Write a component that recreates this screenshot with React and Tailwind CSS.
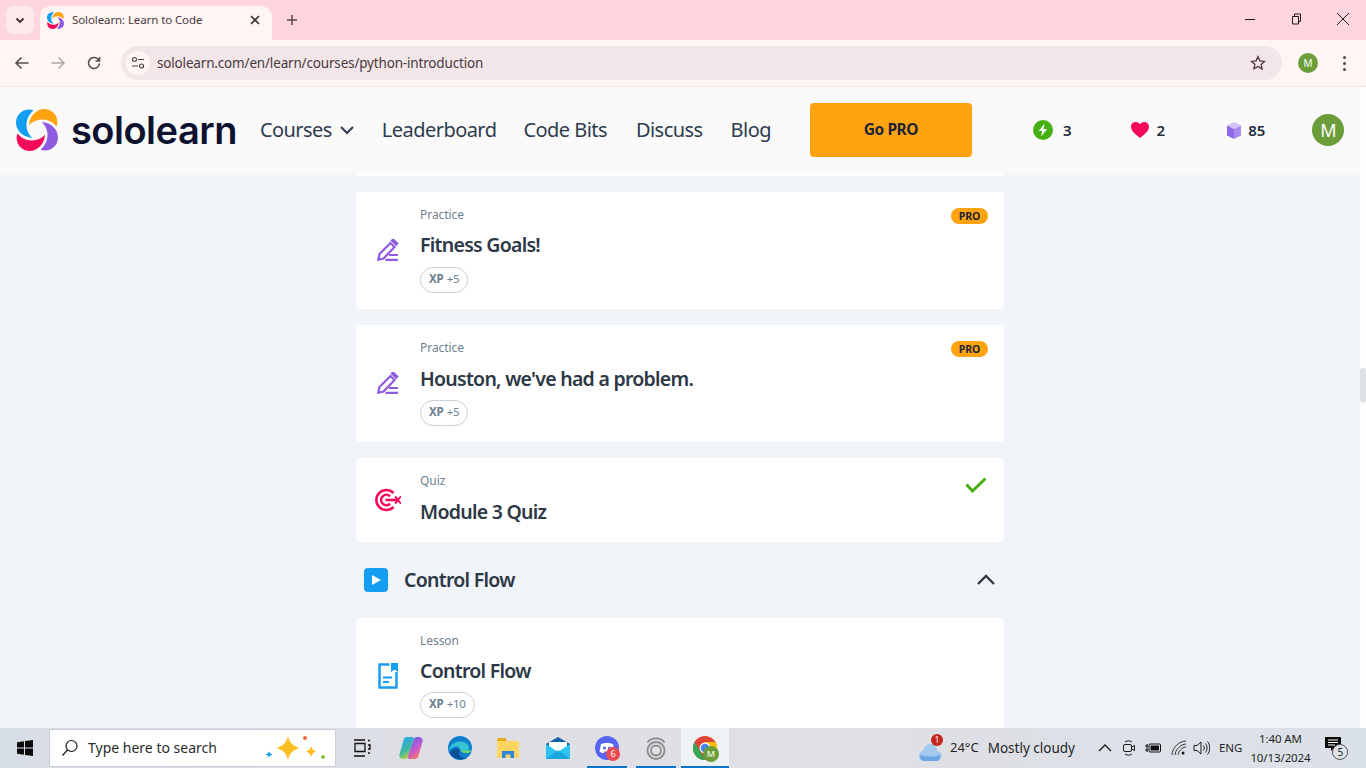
import React from "react";

const SANS = "font-['Noto_Sans','Open_Sans',sans-serif]";
const BLADE = "M13 .6C5.5.8 0 6.500 0 13.600 0 21.800 7 28.300 16.200 29 12.500 25.500 10.300 20.500 10.500 15.500 10.700 9.500 13.500 4.800 17.500 1.500 16.300 .9 14.800 .6 13 .6Z";

function LogoMark({ size }) {
  return (
    <svg width={size} height={size} viewBox="0 0 42 42" className="shrink-0">
      <path d={BLADE} fill="#149ef2" />
      <path d={BLADE} fill="#ffa310" transform="rotate(90 21 21)" />
      <path d={BLADE} fill="#8e5ae0" transform="rotate(180 21 21)" />
      <path d={BLADE} fill="#f50a5a" transform="rotate(270 21 21)" />
    </svg>
  );
}

function TabStrip() {
  return (
    <div className={`flex h-10 items-end bg-[#ffd6de] pl-[6px] ${SANS}`}>
      <div className="mb-[6px] flex h-[28px] w-[28px] items-center justify-center rounded-lg bg-[#ffe8ec]">
        <svg width="12" height="12" viewBox="0 0 12 12" fill="none" stroke="#3d2b30" strokeWidth="1.800"><path d="M2.500 4.500 6 8l3.500-3.500" /></svg>
      </div>
      <div className="ml-[6px] flex h-[34px] w-[232px] items-center rounded-t-[10px] bg-[#fff5f5] pb-[6px] pl-[7px] pr-[11px]">
        <LogoMark size={17} />
        <span className="ml-2 flex-1 text-[11.5px] tracking-[-0.1px] text-[#4a3a3e]">Sololearn: Learn to Code</span>
        <svg width="12" height="12" viewBox="0 0 12 12" fill="none" stroke="#3d2b30" strokeWidth="1.600"><path d="M2 2l8 8M10 2l-8 8" /></svg>
      </div>
      <div className="mb-[14px] ml-[14px] flex h-3 w-3 items-center justify-center">
        <svg width="12" height="12" viewBox="0 0 12 12" fill="none" stroke="#5a4348" strokeWidth="1.500"><path d="M6 1v10M1 6h10" /></svg>
      </div>
      <div className="mb-[14px] ml-auto flex items-center">
        <svg width="12" height="12" viewBox="0 0 12 12" stroke="#1a1a1a" fill="none" className="mr-[34px]"><path d="M1 6.500h10" /></svg>
        <svg width="12" height="12" viewBox="0 0 12 12" stroke="#1a1a1a" fill="none" className="mr-[34px]"><path d="M2.500 3.500h6v7.500h-6zM4.500 3.500V1h6v7.500h-2" /></svg>
        <svg width="14" height="14" viewBox="0 0 14 14" stroke="#1a1a1a" fill="none" className="mr-4"><path d="M1 1l12 12M13 1 1 13" /></svg>
      </div>
    </div>
  );
}

function Toolbar() {
  return (
    <div className={`flex h-[47px] items-center border-b border-[#f5dfe3] bg-[#fff5f5] pl-[14px] ${SANS}`}>
      <svg width="16" height="16" viewBox="0 0 16 16" fill="none" stroke="#5a4a4e" strokeWidth="1.600"><path d="M14.500 8H2M7.500 2.500 2 8l5.500 5.500" /></svg>
      <svg width="16" height="16" viewBox="0 0 16 16" fill="none" stroke="#b4a6a9" strokeWidth="1.600" className="ml-5"><path d="M1.500 8H14M8.500 2.500 14 8l-5.500 5.500" /></svg>
      <svg width="16" height="16" viewBox="0 0 16 16" fill="none" stroke="#5a4a4e" strokeWidth="1.600" className="ml-[20px]"><path d="M13.500 8.500A5.500 5.500 0 1 1 12 4.200L13.500 6M13.500 2v4h-4" /></svg>
      <div className="ml-[19px] flex h-[34px] flex-1 items-center rounded-full bg-[#f2e6e9] pl-[5px] pr-[16px]">
        <div className="flex h-6 w-6 items-center justify-center rounded-full bg-[#fff5f5]">
          <svg width="14" height="14" viewBox="0 0 14 14" fill="none" stroke="#4a3a3e" strokeWidth="1.200"><circle cx="3.500" cy="3.500" r="2" /><path d="M7 3.500h6M1 10h6" /><circle cx="10.500" cy="10" r="2" /></svg>
        </div>
        <span className="ml-[7px] flex-1 text-[13.5px] tracking-[-0.17px] text-[#4a3a3e]">sololearn.com/en/learn/courses/python-introduction</span>
        <svg width="16" height="16" viewBox="0 0 24 24" fill="none" stroke="#4a3a3e" strokeWidth="2"><path d="M12 2.500l2.900 6.300 6.900.8-5.100 4.700 1.400 6.800L12 17.200 5.900 20.600l1.400-6.800L2.200 9.600l6.900-.8z" /></svg>
      </div>
      <div className="ml-[16px] flex h-5 w-5 items-center justify-center rounded-full bg-[#6b9d3a] text-[10px] text-white">M</div>
      <div className="ml-[25px] mr-[20px] flex w-[3px] flex-col gap-[3px]">
        <span className="h-[3px] w-[3px] rounded-full bg-[#5a4348]" />
        <span className="h-[3px] w-[3px] rounded-full bg-[#5a4348]" />
        <span className="h-[3px] w-[3px] rounded-full bg-[#5a4348]" />
      </div>
    </div>
  );
}

function NavLink({ children, className = "" }) {
  return <span className={`text-[20px] tracking-[-0.55px] text-[#2d3b4e] ${className}`}>{children}</span>;
}

function SiteHeader() {
  return (
    <header className={`flex h-[86px] shrink-0 items-center bg-[#fafafa] pl-4 ${SANS}`}>
      <LogoMark size={42} />
      <span className="ml-[13px] font-['Inter',sans-serif] text-[38px] font-semibold leading-none tracking-[-0.5px] text-[#0c1230]">sololearn</span>
      <NavLink className="ml-[23px]">Courses</NavLink>
      <svg width="16" height="16" viewBox="0 0 16 16" fill="none" stroke="#2d3b4e" strokeWidth="2" className="ml-[7px]"><path d="M2 5l6 6 6-6" /></svg>
      <NavLink className="ml-[27px]">Leaderboard</NavLink>
      <NavLink className="ml-[27px]">Code Bits</NavLink>
      <NavLink className="ml-[29px]">Discuss</NavLink>
      <NavLink className="ml-[28px]">Blog</NavLink>
      <div className="ml-[39px] flex h-[54px] w-[162px] items-center justify-center rounded bg-[#ffa310] text-[15.5px] font-bold tracking-[-0.4px] text-[#1d2433]">Go PRO</div>
      <svg width="20" height="20" viewBox="0 0 20 20" className="ml-[61px]">
        <circle cx="10" cy="10" r="10" fill="#46b012" />
        <path d="M11.500 3.500 5.800 11h3.400l-1 5.500L14.200 9h-3.600z" fill="#fff" />
      </svg>
      <span className="ml-[10px] text-[15px] font-semibold text-[#222c3a]">3</span>
      <svg width="18" height="16" viewBox="0 0 18 16" className="ml-[59px]">
        <path d="M9 16C6 13.500 0 9.500 0 4.800 0 2 2.200 0 4.800 0 6.500 0 8 .9 9 2.300 10 .9 11.500 0 13.200 0 15.800 0 18 2 18 4.800 18 9.500 12 13.500 9 16Z" fill="#f50a5a" />
      </svg>
      <span className="ml-[8px] text-[15px] font-semibold text-[#222c3a]">2</span>
      <svg width="14" height="17" viewBox="0 0 14 17" className="ml-[62px]">
        <path d="M7 0l7 3.500L7 7 0 3.500z" fill="#d3c3f5" />
        <path d="M0 3.500 7 7v10l-7-3.500z" fill="#8e6ae8" />
        <path d="M14 3.500 7 7v10l7-3.500z" fill="#a98af0" />
      </svg>
      <span className="ml-[7px] text-[15px] font-semibold text-[#222c3a]">85</span>
      <div className="ml-[47px] flex h-8 w-8 items-center justify-center rounded-full bg-[#6b9d3a] text-lg text-white">M</div>
    </header>
  );
}

function PencilIcon() {
  return (
    <svg width="22" height="22" viewBox="0 0 22 22" fill="none" stroke="#8e5ae0" strokeWidth="2.200">
      <path d="M1.300 20.700 2.500 15 13.500 4l4 4L6.500 19.500z" />
      <path d="M15 1.500l1.200-1 4 4-1 1.200z" fill="#8e5ae0" />
      <path d="M12 16h9M8.500 20.800H21" />
    </svg>
  );
}

function TargetIcon() {
  return (
    <svg width="26" height="24" viewBox="0 0 26 24" fill="none" stroke="#f50a5a" strokeWidth="2.600">
      <path d="M18.500 5A10 10 0 1 0 18.500 19" />
      <path d="M15 8.300A5.200 5.200 0 1 0 15 15.700" />
      <path d="M10.500 12H24" />
      <path d="M20 8.500l3.500 3.500-3.500 3.500M26 8.500 22.500 12l3.500 3.500" strokeWidth="1.800" />
    </svg>
  );
}

function DocIcon() {
  return (
    <svg width="20" height="26" viewBox="0 0 20 26" fill="none">
      <path d="M11.500 1.500H1.500v23h17V9" stroke="#149ef2" strokeWidth="2.500" />
      <path d="M13 0h7v9l-3.500-2.500L13 9z" fill="#149ef2" />
      <path d="M5 14.500h9M5 19h6" stroke="#149ef2" strokeWidth="2" />
    </svg>
  );
}

function XpPill({ value, className = "" }) {
  return (
    <div className={`flex h-[26px] w-fit items-center gap-[3.5px] rounded-full border border-[#c8d2dc] px-2 pb-[2px] text-[11.5px] leading-none tracking-[-0.3px] text-[#6e7f92] ${className}`}>
      <span className="font-bold">XP</span>
      <span>{value}</span>
    </div>
  );
}

function Card({ label, title, icon, xp, pro, check, cardClass = "pb-4 pt-[15px]", titleClass = "mt-[9px]", pillClass = "mt-[9px]", iconClass = "items-center" }) {
  return (
    <div className={`relative flex w-[648px] shrink-0 rounded bg-white ${cardClass}`}>
      <div className={`flex w-[64px] shrink-0 justify-center ${iconClass}`}>{icon}</div>
      <div className="flex flex-col">
        <span className="h-4 text-xs leading-4 tracking-[-0.05px] text-[#6e7f92]">{label}</span>
        <span className={`h-[26px] text-[19.5px] font-semibold leading-[26px] tracking-[-0.73px] text-[#2d3846] ${titleClass}`}>{title}</span>
        {xp && <XpPill value={xp} className={pillClass} />}
      </div>
      {pro && (
        <span className="absolute right-4 top-4 flex h-4 w-[37px] items-center justify-center rounded-full bg-[#ffa310] text-[10.5px] font-bold leading-none text-[#1d2433]">PRO</span>
      )}
      {check && (
        <svg width="22" height="16" viewBox="0 0 22 16" fill="none" stroke="#46b012" strokeWidth="3" className="absolute right-[17px] top-[19px]">
          <path d="M1.500 7.500 7.500 14 20.500 1.500" />
        </svg>
      )}
    </div>
  );
}

function SectionHeader() {
  return (
    <div className="flex h-[76px] w-[648px] shrink-0 items-center px-2">
      <div className="flex h-6 w-6 items-center justify-center rounded bg-[#149ef2]">
        <svg width="10" height="10" viewBox="0 0 10 10"><path d="M1 0l9 5-9 5z" fill="#fff" /></svg>
      </div>
      <span className="ml-4 flex-1 text-[19.5px] font-semibold tracking-[-0.73px] text-[#2d3846]">Control Flow</span>
      <svg width="20" height="20" viewBox="0 0 20 20" fill="none" stroke="#2d3846" strokeWidth="2.300"><path d="M2 14l8-8 8 8" /></svg>
    </div>
  );
}

function Content() {
  return (
    <main className={`min-h-0 flex-1 overflow-hidden bg-[#f1f4f8] ${SANS}`}>
      <div className="flex flex-col items-center">
        <div className="h-[3px] w-[648px] shrink-0 rounded-b bg-white" />
        <div className="mt-4 flex flex-col gap-4">
          <Card label="Practice" title="Fitness Goals!" xp="+5" pro icon={<PencilIcon />} />
          <Card label="Practice" title="Houston, we've had a problem." xp="+5" pro icon={<PencilIcon />} titleClass="mt-[10px]" pillClass="mt-[8px]" />
          <Card label="Quiz" title="Module 3 Quiz" check icon={<TargetIcon />} cardClass="pb-[17px] pt-[15px]" titleClass="mt-[10px]" iconClass="items-start pt-[15px]" />
        </div>
        <SectionHeader />
        <Card label="Lesson" title="Control Flow" xp="+10" icon={<DocIcon />} pillClass="mt-[8px]" />
      </div>
    </main>
  );
}

function Windows() {
  return (
    <svg width="16" height="16" viewBox="0 0 16 16" fill="#0a0a0a">
      <path d="M0 2.200 7 1.200V7.500H0zM8 1 16 0V7.500H8zM0 8.500h7v6.300L0 13.800zM8 8.500h8V16l-8-1z" />
    </svg>
  );
}

function Sparkles() {
  return (
    <svg width="62" height="30" viewBox="0 0 62 30" className="ml-auto mr-[9px]">
      <path d="M24 3c1.800 6.500 4 9.500 11.500 12C28 17.500 25.800 20.500 24 27c-1.800-6.500-4-9.500-11.500-12C20 12.500 22.200 9.500 24 3Z" fill="#fbbf24" />
      <path d="M47 13c.7 2.800 1.800 4.200 5 5.500-3.200 1.300-4.300 2.700-5 5.500-.7-2.800-1.800-4.200-5-5.500 3.200-1.300 4.300-2.700 5-5.500Z" fill="#fbbf24" />
      <path d="M5 18c.4 1.800 1.200 2.700 3.500 3.500-2.300.8-3.100 1.700-3.500 3.500-.4-1.800-1.200-2.700-3.500-3.500 2.300-.8 3.100-1.700 3.500-3.500Z" fill="#1aa0ea" />
      <circle cx="41" cy="5" r="2" fill="#ef6a3a" />
      <circle cx="59" cy="24" r="2" fill="#8ac63c" />
    </svg>
  );
}

function AppSlot({ children, active, open, className = "w-[48px]" }) {
  return (
    <div className={`relative flex h-10 shrink-0 items-center justify-center ${active ? "bg-[#eef2f6]" : ""} ${className}`}>
      {children}
      {open && <span className="absolute inset-x-0 bottom-0 h-[2px] bg-[#0a74c9]" />}
    </div>
  );
}

function Taskbar() {
  return (
    <footer className={`flex h-10 shrink-0 items-center bg-gradient-to-r from-[#d7dde6] via-[#e1dfe4] to-[#dbe1e9] ${SANS}`}>
      <div className="flex w-[49px] justify-center"><Windows /></div>
      <div className="flex h-[38px] w-[287px] items-center border border-[#c9ced6] bg-white pl-[11px]">
        <svg width="18" height="18" viewBox="0 0 18 18" fill="none" stroke="#1a1a1a" strokeWidth="1.200"><circle cx="10.500" cy="7" r="5.500" /><path d="M6.500 11 1.500 16.500" /></svg>
        <span className="ml-[9px] text-sm text-[#2b2b2b]">Type here to search</span>
        <Sparkles />
      </div>
      <AppSlot className="ml-[1px] w-[49px]">
        <svg width="18" height="18" viewBox="0 0 18 18" fill="none" stroke="#111" strokeWidth="1.300">
          <path d="M1 1h11M1 17h11M2 4.500h10v8H2z" />
          <path d="M15 1.500h2M15 6h2v4h-2M15 14h2" />
        </svg>
      </AppSlot>
      <AppSlot className="w-[50px]">
        <svg width="24" height="24" viewBox="0 0 24 24">
          <defs>
            <linearGradient id="cp1" x1="0.200" y1="0" x2="0.600" y2="1"><stop offset="0" stopColor="#2aa8f2" /><stop offset="0.600" stopColor="#3fb8a0" /><stop offset="1" stopColor="#c8d63a" /></linearGradient>
            <linearGradient id="cp2" x1="0.300" y1="0" x2="0.800" y2="1"><stop offset="0" stopColor="#6a5cf0" /><stop offset="0.600" stopColor="#d35bc0" /><stop offset="1" stopColor="#f5894a" /></linearGradient>
          </defs>
          <path d="M8 1h5c1.500 0 2 1 1.500 2.500L9.500 20c-.5 1.700-1.500 3-3.500 3H4c-2.500 0-4.200-2-3.500-4.500L4.500 4C5 2 6 1 8 1Z" fill="url(#cp1)" />
          <path d="M15.500 23h-5c-1.500 0-2-1-1.500-2.500L14.500 4c.5-1.700 1.500-3 3.500-3h2c2.500 0 4.200 2 3.500 4.500L19.500 20c-.5 2-1.500 3-4 3Z" fill="url(#cp2)" />
        </svg>
      </AppSlot>
      <AppSlot>
        <svg width="26" height="26" viewBox="0 0 26 26">
          <circle cx="13" cy="13" r="12" fill="#0f7fd0" />
          <path d="M2 16C3 7 14 4 20 9c3 2.500 3 7-1 7h-6c2-5-7-7-11 0Z" fill="#37c6d0" />
          <path d="M13 16c-3 4 2 8 7 7-6 3-14 1-17-5 2-5 8-6 10-2Z" fill="#0b4f96" />
          <path d="M24 15c0 2-2 3.500-5 3-3 0-4-1-5-2h5c2 0 4-1 5-1Z" fill="#7fd858" />
        </svg>
      </AppSlot>
      <AppSlot>
        <svg width="24" height="22" viewBox="0 0 24 22">
          <path d="M1 3a2 2 0 0 1 2-2h6l2 3H1z" fill="#e9a913" />
          <rect x="1" y="4" width="22" height="17" rx="1" fill="#ffd561" />
          <path d="M6 21v-7h12v7h-3.500v-3.500h-5V21z" fill="#2b88d8" />
        </svg>
      </AppSlot>
      <AppSlot className="ml-[2px] w-[48px]">
        <svg width="24" height="22" viewBox="0 0 24 22">
          <path d="M12 0 24 7v15H0V7z" fill="#0c5fa8" />
          <path d="M3 5h18v9L12 18 3 14z" fill="#fff" />
          <path d="M0 7l12 8 12-8v15H0z" fill="#2cc4f2" />
          <path d="M0 22 12 13l12 9z" fill="#139ad6" opacity=".7" />
        </svg>
      </AppSlot>
      <AppSlot open className="ml-[5px] w-[40px]">
        <svg width="24" height="24" viewBox="0 0 24 24">
          <circle cx="12" cy="12" r="12" fill="#5865f2" />
          <path d="M6 8c3-1.500 9-1.500 12 0l1.500 7.500c-1.500 1-3 1.500-4 1.700l-.9-1.600H9.400l-.9 1.600c-1-.2-2.500-.7-4-1.700z" fill="#fff" />
          <circle cx="9.500" cy="12" r="1.500" fill="#5865f2" />
          <circle cx="14.500" cy="12" r="1.500" fill="#5865f2" />
        </svg>
        <span className="absolute left-[19px] top-[19px] flex h-[14px] w-[14px] items-center justify-center rounded-full bg-[#ea4a4f] text-[9px] text-white">6</span>
      </AppSlot>
      <AppSlot open className="ml-[9px] w-[40px]">
        <svg width="20" height="24" viewBox="0 0 20 24" fill="none" stroke="#8b8b8b" strokeWidth="1.800">
          <circle cx="10" cy="14.500" r="8.500" />
          <circle cx="10" cy="14.500" r="5" />
          <path d="M1.500 6.500C5 1 15 1 18.500 6.500" />
        </svg>
      </AppSlot>
      <AppSlot open active className="ml-[5px] w-[48px]">
        <svg width="24" height="24" viewBox="0 0 24 24">
          <circle cx="12" cy="12" r="12" fill="#e14434" />
          <path d="M12 24A12 12 0 0 1 1.600 6L7 15z" fill="#34a853" />
          <path d="M12 24A12 12 0 0 0 22.400 6H12l5 9z" fill="#fbbc04" />
          <circle cx="12" cy="12" r="5.500" fill="#fff" />
          <circle cx="12" cy="12" r="4.300" fill="#4285f4" />
        </svg>
        <span className="absolute left-[22px] top-[18px] flex h-4 w-4 items-center justify-center rounded-full bg-[#6b9d3a] text-[9px] font-semibold text-[#e8f0dc]">M</span>
      </AppSlot>
      <div className="ml-[189px] flex items-center">
        <div className="relative h-6 w-6">
          <svg width="24" height="20" viewBox="0 0 24 20" className="absolute left-0 top-[5px]">
            <path d="M6 20a5 5 0 0 1-1-9.900C6 5 10 2 14 3c4 1 5 4 5 7a5 5 0 0 1-1 10z" fill="#a4c8ee" />
            <path d="M2 14c5 2 14 2 20 0v2c0 3-2 4-4 4H6c-2 0-4-2-4-6Z" fill="#6ea5e3" />
          </svg>
          <span className="absolute right-[-1px] top-[-2px] flex h-[12px] w-[12px] items-center justify-center rounded-full bg-[#c4261d] text-[8px] leading-none text-white">1</span>
        </div>
        <span className="ml-[8px] text-[13px] text-[#1f1f1f]">24°C</span>
        <span className="ml-[9px] text-[13.5px] text-[#1f1f1f]">Mostly cloudy</span>
      </div>
      <svg width="14" height="14" viewBox="0 0 14 14" fill="none" stroke="#1a1a1a" strokeWidth="1.300" className="ml-[23px]"><path d="M1 10l6-6 6 6" /></svg>
      <svg width="14" height="16" viewBox="0 0 14 16" fill="none" stroke="#1a1a1a" className="ml-[10px]">
        <rect x="1.500" y="4.500" width="8" height="7" rx="1.500" /><path d="M9.500 7l3-1.500v5l-3-1.500M3 2c2-1.500 5-1.500 7 0M3 14c2 1.500 5 1.500 7 0" />
      </svg>
      <svg width="16" height="12" viewBox="0 0 16 12" className="ml-[9px]">
        <rect x="4" y="2" width="11.500" height="8" rx="1" fill="none" stroke="#111" /><rect x="5.500" y="3.500" width="8.500" height="5" fill="#111" />
        <path d="M0 4h3M0 8h3M2 2v8" stroke="#111" />
      </svg>
      <svg width="16" height="16" viewBox="0 0 16 16" fill="none" stroke="#333" className="ml-[10px]">
        <path d="M1 15C1 8 8 1 15 1M4 15c0-5 6-11 11-11M7 15c0-3 4-8 8-8" /><circle cx="12" cy="13" r="1.500" fill="#111" stroke="none" />
      </svg>
      <svg width="17" height="16" viewBox="0 0 17 16" fill="none" stroke="#1a1a1a" className="ml-[6px]">
        <path d="M1 5.500h3L8 2v12L4 10.500H1zM10.500 5.500c1 1.500 1 3.500 0 5M12.500 3.500c2 2.500 2 6.500 0 9M14.500 1.500c3 3.500 3 9.500 0 13" />
      </svg>
      <span className="ml-[9px] text-[11.5px] text-[#1f1f1f]">ENG</span>
      <div className="ml-[9px] flex w-[58px] flex-col items-center text-[11.5px] leading-[19px] tracking-[-0.1px] text-[#1f1f1f]">
        <span className="whitespace-nowrap">1:40 AM</span>
        <span className="whitespace-nowrap">10/13/2024</span>
      </div>
      <div className="relative ml-[14px] h-6 w-6">
        <svg width="16" height="15" viewBox="0 0 16 15" className="absolute left-[2px] top-[1px]">
          <path d="M0 0h16v11H9l-3 3v-3H0z" fill="#0a0a0a" />
          <path d="M3 3h10M3 5.500h10M3 8h7" stroke="#fff" />
        </svg>
        <span className="absolute left-[9px] top-[8px] flex h-[16px] w-[16px] items-center justify-center rounded-full border border-[#555] bg-[#dfe2e8] text-[10px] leading-none text-[#1f1f1f]">5</span>
      </div>
    </footer>
  );
}

export default function App() {
  return (
    <div className="flex h-screen w-full flex-col overflow-hidden">
      <TabStrip />
      <Toolbar />
      <div className="flex min-h-0 flex-1">
        <div className="flex min-w-0 flex-1 flex-col">
          <SiteHeader />
          <Content />
        </div>
        <div className="w-[6px] shrink-0 bg-[#fdfdfd] pt-[281px]">
          <div className="h-[35px] w-[6px] rounded-sm bg-[#dfe2e6]" />
        </div>
      </div>
      <Taskbar />
    </div>
  );
}
